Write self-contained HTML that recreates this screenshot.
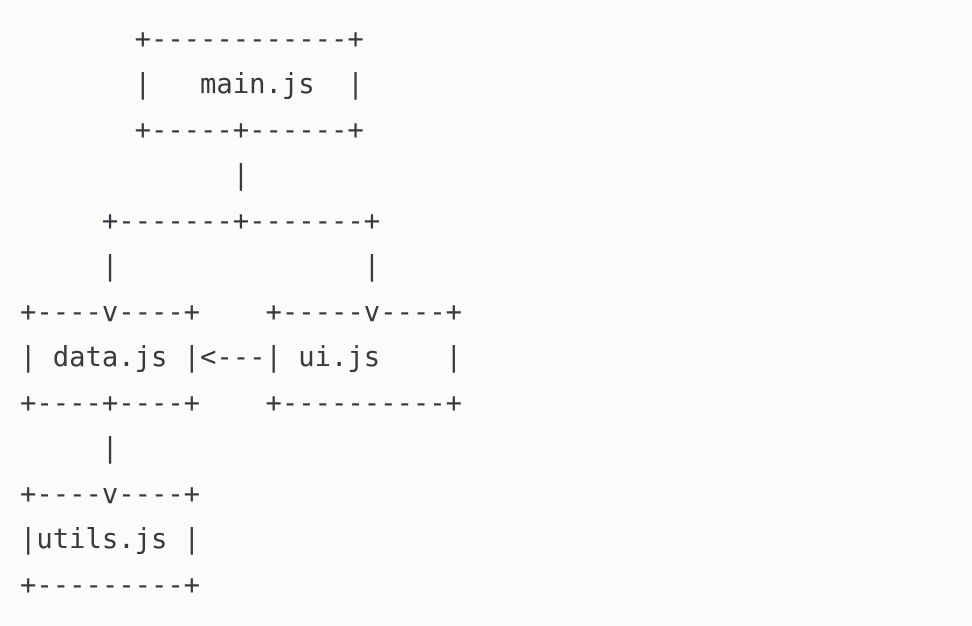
<!DOCTYPE html>
<html><head><meta charset="utf-8"><style>
html,body{margin:0;padding:0;background:#fcfbfa;width:972px;height:626px;overflow:hidden}
pre{margin:0;position:absolute;left:20px;top:17px;font-family:"DejaVu Sans Mono","Liberation Mono",monospace;font-size:27.2px;line-height:45.47px;color:#383a42;}
</style></head><body><pre>       +------------+
       |   main.js  |
       +-----+------+
             |
     +-------+-------+
     |               |
+----v----+    +-----v----+
| data.js |&lt;---| ui.js    |
+----+----+    +----------+
     |
+----v----+
|utils.js |
+---------+</pre></body></html>
